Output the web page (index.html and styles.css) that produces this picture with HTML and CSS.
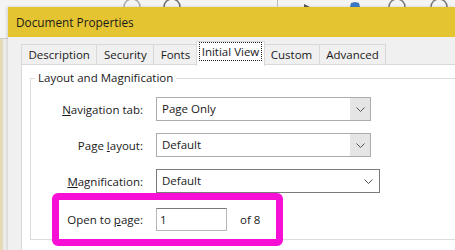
FILE: index.html
```html
<!DOCTYPE html>
<html lang="en">

<head>
    <meta charset="UTF-8">
    <title>Document Properties</title>
    <link rel="stylesheet" href="styles.css">
</head>

<body>
    <div class="toolbar">
        <svg width="455" height="7" viewBox="0 0 455 7">
            <path d="M124 7 A8 8 0 0 1 140 7" fill="none" stroke="#a8a8a8" stroke-width="1.5"/>
            <path d="M164 7 A8 8 0 0 1 180 7" fill="none" stroke="#6e6e6e" stroke-width="1.5"/>
            <line x1="277.5" y1="0" x2="277.5" y2="7" stroke="#bdbdbd"/>
            <path d="M304 4 L310 7 L304 7 Z" fill="#555"/>
            <path d="M350 7 L351 3 L355 2 L359 3 L360 7 Z" fill="#3a77c2"/>
            <path d="M389 7 A8 8 0 0 1 405 7" fill="none" stroke="#777" stroke-width="1.5"/>
            <path d="M431 7 A8 8 0 0 1 447 7" fill="none" stroke="#777" stroke-width="1.5"/>
        </svg>
    </div>

    <div class="dialog">
        <div class="titlebar">Document Properties</div>
        <div class="dialog-body">
            <div class="tabs">
                <div class="tab">Description</div>
                <div class="tab">Security</div>
                <div class="tab">Fonts</div>
                <div class="tab active"><span class="focus">Initial View</span></div>
                <div class="tab">Custom</div>
                <div class="tab">Advanced</div>
            </div>
            <div class="panel">
                <fieldset class="group">
                    <legend>Layout and Magnification</legend>

                    <div class="row">
                        <label><u>N</u>avigation tab:</label>
                        <div class="combo disabled">
                            <span class="value">Page Only</span>
                            <span class="arrow"><svg width="9" height="5" viewBox="0 0 9 5"><path d="M0.5 0.5 L4.5 4.5 L8.5 0.5" fill="none" stroke="#555" /></svg></span>
                        </div>
                    </div>

                    <div class="row">
                        <label>Page <u>l</u>ayout:</label>
                        <div class="combo disabled">
                            <span class="value">Default</span>
                            <span class="arrow"><svg width="9" height="5" viewBox="0 0 9 5"><path d="M0.5 0.5 L4.5 4.5 L8.5 0.5" fill="none" stroke="#555" /></svg></span>
                        </div>
                    </div>

                    <div class="row">
                        <label><u>M</u>agnification:</label>
                        <div class="combo wide">
                            <span class="value">Default</span>
                            <span class="arrow"><svg width="9" height="5" viewBox="0 0 9 5"><path d="M0.5 0.5 L4.5 4.5 L8.5 0.5" fill="none" stroke="#555" /></svg></span>
                        </div>
                    </div>

                    <div class="highlight">
                        <label>Open to <u>p</u>age:</label>
                        <div class="page-input">1</div>
                        <span class="page-count">of 8</span>
                    </div>
                </fieldset>
            </div>
        </div>
    </div>
</body>

</html>
```

FILE: styles.css
```css
body {
    margin: 0;
    font-family: "Open Sans", "Noto Sans", sans-serif;
    font-size: 11.5px;
    color: #1a1a1a;
    overflow: hidden;
    height: 250px;
    background:
        linear-gradient(to right, #e4d9b4 0, #e4d9b4 3px, #ececec 3px, #f2f2f2 8px) 0 39px / 8px 100% no-repeat,
        linear-gradient(#cfcfcf, #cfcfcf) 0 38px / 8px 1px no-repeat,
        #f4f4f4;
}

.toolbar {
    height: 7px;
    overflow: hidden;
}

.toolbar svg {
    display: block;
}

.dialog {
    margin-left: 8px;
    box-shadow: -1px 0 3px rgba(0, 0, 0, 0.15);
}

.titlebar {
    height: 30px;
    line-height: 30px;
    padding-left: 8px;
    background-color: #e4c431;
    font-size: 11.8px;
}

.dialog-body {
    background-color: #f0f0f0;
    padding: 7px 0 0 13px;
}

.tabs {
    display: flex;
    height: 20px;
    position: relative;
    z-index: 1;
}

.tab {
    height: 19px;
    line-height: 19px;
    padding: 0 6.5px;
    border: 1px solid #d9d9d9;
    border-bottom: none;
    margin-right: -1px;
    background-color: #f0f0f0;
}

.tab.active {
    height: 24px;
    margin-top: -3px;
    line-height: 20px;
    padding: 0 3px;
    background-color: #fff;
    margin-left: -1px;
    margin-right: -2px;
    position: relative;
    z-index: 2;
}

.focus {
    display: inline-block;
    line-height: 17px;
    padding: 0 2px;
    margin-top: 1px;
    outline: 1px dotted #222;
}

.panel {
    background-color: #fff;
    border: 1px solid #d9d9d9;
    border-right: none;
    height: 180px;
    padding: 5px 0 0 8px;
}

.group {
    margin: 0;
    padding: 11px 0 0 0;
    border: 1px solid #dcdcdc;
    border-right: none;
}

.group legend {
    padding: 0 3px;
    margin-left: 4px;
    line-height: 16px;
}

.row {
    display: flex;
    align-items: center;
    gap: 13px;
    margin-bottom: 12px;
}

.row label {
    width: 112px;
    text-align: right;
}

.combo {
    display: flex;
    height: 22px;
    width: 213px;
    border: 1px solid #acacac;
    background-color: #fff;
}

.combo .value {
    flex: 1;
    line-height: 22px;
    padding-left: 5px;
}

.combo .arrow {
    width: 20px;
    display: flex;
    align-items: center;
    justify-content: center;
}

.combo.disabled .arrow {
    background-color: #e5e5e5;
}

.combo.wide {
    width: 222px;
    border-color: #7a7a7a;
}

.combo.wide .arrow {
    width: 22px;
}

.highlight {
    display: flex;
    align-items: center;
    width: 217px;
    height: 39px;
    margin: -12px 0 -7px 21px;
    border: 7px solid #f70fd6;
    border-radius: 6px;
    background-color: #fff;
    position: relative;
}

.highlight label {
    width: 84px;
    text-align: right;
}

.page-input {
    width: 66px;
    height: 21px;
    line-height: 21px;
    margin-left: 13px;
    padding-left: 3px;
    border: 1px solid #b7b7b7;
    border-top-color: #7a7a7a;
}

.page-count {
    margin-left: 13px;
}
```
